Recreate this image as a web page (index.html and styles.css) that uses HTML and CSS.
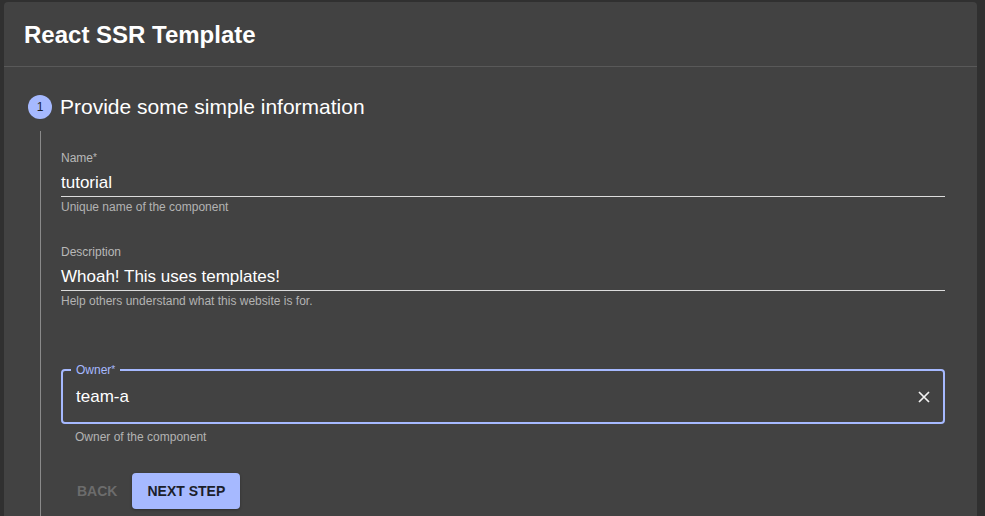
FILE: index.html
```html
<!DOCTYPE html>
<html lang="en">

<head>
    <meta charset="UTF-8">
    <title>React SSR Template</title>
    <link rel="stylesheet" href="styles.css">
</head>

<body>
    <div class="card">
        <div class="card-header">
            <h2 class="card-title">React SSR Template</h2>
        </div>

        <div class="stepper">
            <div class="step-head">
                <span class="step-icon">1</span>
                <span class="step-label">Provide some simple information</span>
            </div>

            <div class="step-content">
                <div class="field">
                    <label class="field-label">Name<span class="req">*</span></label>
                    <div class="field-input">tutorial</div>
                    <p class="field-help">Unique name of the component</p>
                </div>

                <div class="field">
                    <label class="field-label">Description</label>
                    <div class="field-input">Whoah! This uses templates!</div>
                    <p class="field-help">Help others understand what this website is for.</p>
                </div>

                <div class="outlined">
                    <div class="outlined-box">
                        <span class="outlined-label">Owner<span class="req">*</span></span>
                        <span class="outlined-value">team-a</span>
                        <svg class="clear-icon" width="12" height="12" viewBox="0 0 12 12">
                            <path d="M1 1 L11 11 M11 1 L1 11" stroke="#f2f2f2" stroke-width="1.7" fill="none" />
                        </svg>
                    </div>
                    <p class="outlined-help">Owner of the component</p>
                </div>

                <div class="actions">
                    <button class="btn btn-back" disabled>Back</button>
                    <button class="btn btn-next">Next step</button>
                </div>
            </div>
        </div>
    </div>
</body>

</html>
```

FILE: styles.css
```css
body {
    margin: 0;
    background: #303030;
    font-family: 'Liberation Sans', Arial, sans-serif;
    color: #fff;
    height: 516px;
    overflow: hidden;
}

/* Card */
.card {
    margin: 2px 8px 0 4px;
    min-height: 600px;
    background: #424242;
    border-radius: 4px;
}

.card-header {
    height: 64px;
    display: flex;
    align-items: center;
    padding: 0 20px;
    border-bottom: 1px solid #595959;
}

.card-title {
    margin: 2px 0 0;
    font-size: 24px;
    font-weight: bold;
}

/* Stepper */
.stepper {
    padding: 27px 32px 0 24px;
}

.step-head {
    display: flex;
    align-items: center;
    gap: 8px;
}

.step-icon {
    width: 24px;
    height: 24px;
    border-radius: 50%;
    background: #a6b9ff;
    color: #1c1f2b;
    font-size: 12px;
    display: flex;
    align-items: center;
    justify-content: center;
}

.step-label {
    font-size: 21px;
    line-height: 24px;
    margin-top: 1px;
}

.step-content {
    margin: 12px 0 0 12px;
    padding: 19px 0 40px 20px;
    border-left: 1px solid #8a8a8a;
}

/* Standard fields */
.field {
    margin-bottom: 29px;
}

.field-label {
    display: block;
    font-size: 12px;
    line-height: 16px;
    color: #b8b8b8;
}

.req {
    font-size: 10px;
    vertical-align: 1px;
}

.field-input {
    margin-top: 5px;
    padding-bottom: 2px;
    font-size: 17px;
    line-height: 23px;
    border-bottom: 1px solid #dcdcdc;
}

.field-help {
    margin: 2px 0 0;
    font-size: 12px;
    line-height: 16px;
    color: #b3b3b3;
}

/* Outlined field */
.outlined {
    margin-top: 60px;
}

.outlined-box {
    position: relative;
    height: 51px;
    border: 2px solid #a6b9ff;
    border-radius: 4px;
    display: flex;
    align-items: center;
    padding: 0 13px;
}

.outlined-label {
    position: absolute;
    top: -9px;
    left: 8px;
    padding: 0 5px;
    background: #424242;
    font-size: 12px;
    line-height: 16px;
    color: #a6b9ff;
}

.outlined-value {
    flex: 1;
    font-size: 17px;
}

.outlined-help {
    margin: 5px 0 0 14px;
    font-size: 12px;
    line-height: 16px;
    color: #b3b3b3;
}

/* Buttons */
.actions {
    margin-top: 28px;
    display: flex;
}

.btn {
    height: 36px;
    padding: 0 16px;
    border: none;
    border-radius: 4px;
    font-family: 'Liberation Sans', Arial, sans-serif;
    font-size: 14px;
    font-weight: bold;
    text-transform: uppercase;
}

.btn-back {
    background: none;
    color: #6c6c6c;
    margin-right: -1px;
}

.btn-next {
    padding: 0 15px;
    background: #a6b9ff;
    color: #1c1f2b;
    box-shadow: 0 1px 3px rgba(0, 0, 0, 0.3);
}
```
